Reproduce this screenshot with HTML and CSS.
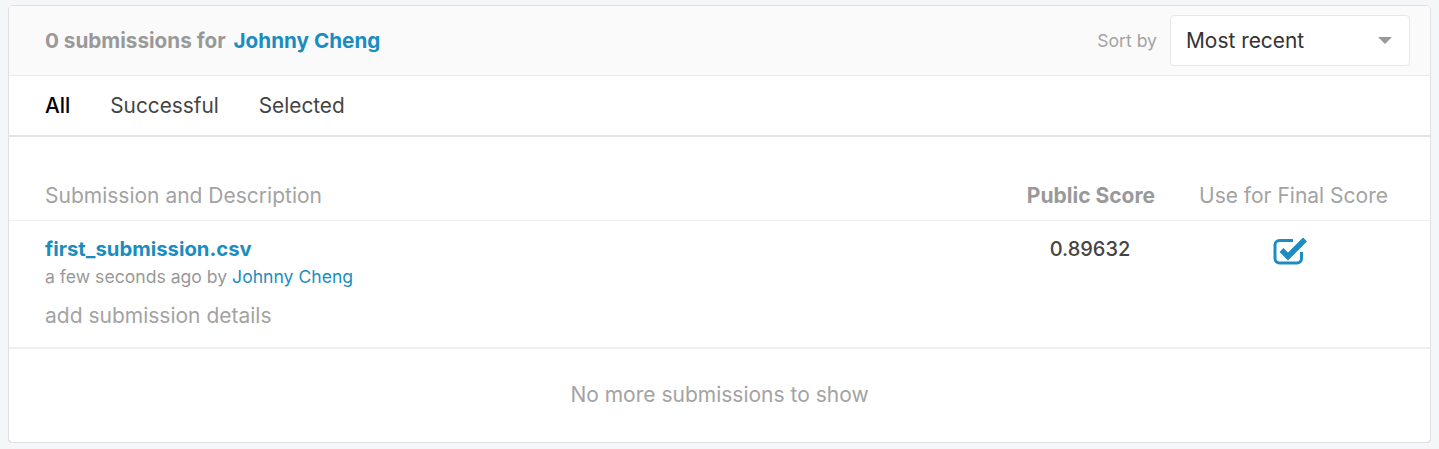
FILE: index.html
```html
<!DOCTYPE html>
<html>
<head>
<meta charset="utf-8">
<link rel="stylesheet" href="styles.css">
</head>
<body>
<div class="card">
  <div class="header">
    <div class="title">0 submissions for <a class="user" href="#">Johnny Cheng</a></div>
    <div class="sort">
      <span class="sort-label">Sort by</span>
      <div class="select"><span>Most recent</span><span class="caret"></span></div>
    </div>
  </div>
  <div class="tabs">
    <span class="tab active">All</span>
    <span class="tab">Successful</span>
    <span class="tab">Selected</span>
  </div>
  <div class="grid head">
    <div class="col-desc">Submission and Description</div>
    <div class="col-score">Public Score</div>
    <div class="col-final">Use for Final Score</div>
  </div>
  <div class="grid row">
    <div class="col-desc">
      <a class="file" href="#">first_submission.csv</a>
      <div class="meta">a few seconds ago by <a class="meta-user" href="#">Johnny Cheng</a></div>
      <div class="details">add submission details</div>
    </div>
    <div class="col-score score">0.89632</div>
    <div class="col-final check">
      <svg width="36" height="32" viewBox="0 0 36 32">
        <path d="M20 5.5 H6.5 a4.5 4.5 0 0 0 -4.5 4.5 V23.5 a4.5 4.5 0 0 0 4.5 4.5 H24 a4.5 4.5 0 0 0 4.5 -4.5 V17" fill="none" stroke="#1b8dc0" stroke-width="3"/>
        <polyline points="8.5,15 15,21.5 32,4.5" fill="none" stroke="#1b8dc0" stroke-width="5.5"/>
      </svg>
    </div>
  </div>
  <div class="footer">No more submissions to show</div>
</div>
</body>
</html>
```
FILE: styles.css
```css
body {
  margin: 5px 8px 0;
  background: #f4f7f8;
  font-family: Inter, "Liberation Sans", sans-serif;
}
a { text-decoration: none; }
.card {
  background: #fff;
  border: 1px solid #dde1e4;
  border-radius: 5px;
  box-shadow: 0 1px 0 #dfe3e6;
  overflow: hidden;
}
.header {
  display: flex;
  align-items: center;
  justify-content: space-between;
  height: 69px;
  padding: 0 20px 0 36px;
  background: #fafafa;
  border-bottom: 1px solid #ebebeb;
}
.title {
  font-size: 20.7px;
  font-weight: 700;
  color: #999;
}
.user { color: #1a8dc0; margin-left: 3px; }
.sort { display: flex; align-items: center; gap: 13px; }
.sort-label { font-size: 17.6px; color: #a3a3a3; }
.select {
  display: flex;
  align-items: center;
  justify-content: space-between;
  box-sizing: border-box;
  width: 240px;
  height: 51px;
  padding: 0 17px 0 15px;
  background: #fff;
  border: 1px solid #e8e8e8;
  border-radius: 4px;
  font-size: 20.9px;
  color: #333;
}
.caret {
  width: 0; height: 0;
  border-left: 7px solid transparent;
  border-right: 7px solid transparent;
  border-top: 7px solid #999;
}
.tabs {
  display: flex;
  align-items: center;
  gap: 40px;
  height: 59px;
  padding-left: 36px;
  border-bottom: 2px solid #e4e4e4;
}
.tab { font-size: 20.8px; color: #444; }
.tab.active { color: #000; font-weight: 500; }
.grid {
  display: grid;
  grid-template-columns: 1fr 134px 217px;
  column-gap: 44px;
  padding: 0 14px 0 36px;
}
.head {
  padding-top: 47px;
  padding-bottom: 12px;
  border-bottom: 1px solid #efefef;
  font-size: 21px;
  line-height: 24px;
  color: #a3a3a3;
  white-space: nowrap;
}
.head .col-score { font-weight: 700; color: #999; text-align: right; }
.row {
  padding-top: 16px;
  padding-bottom: 19px;
  border-bottom: 2px solid #efefef;
  line-height: 24px;
}
.file { font-size: 20.3px; font-weight: 700; color: #1a8dc0; }
.meta { font-size: 17.6px; color: #999; margin-top: 3px; }
.meta-user { color: #1a8dc0; }
.details { font-size: 21px; color: #a3a3a3; margin-top: 15px; }
.score { font-size: 20px; font-weight: 500; color: #444; text-align: center; padding-left: 4px; }
.check { padding-left: 74px; }
.check svg { display: block; margin-top: -2px; }
.footer {
  padding: 34px 0 35px;
  text-align: center;
  font-size: 21px;
  line-height: 24px;
  color: #a3a3a3;
}
```
